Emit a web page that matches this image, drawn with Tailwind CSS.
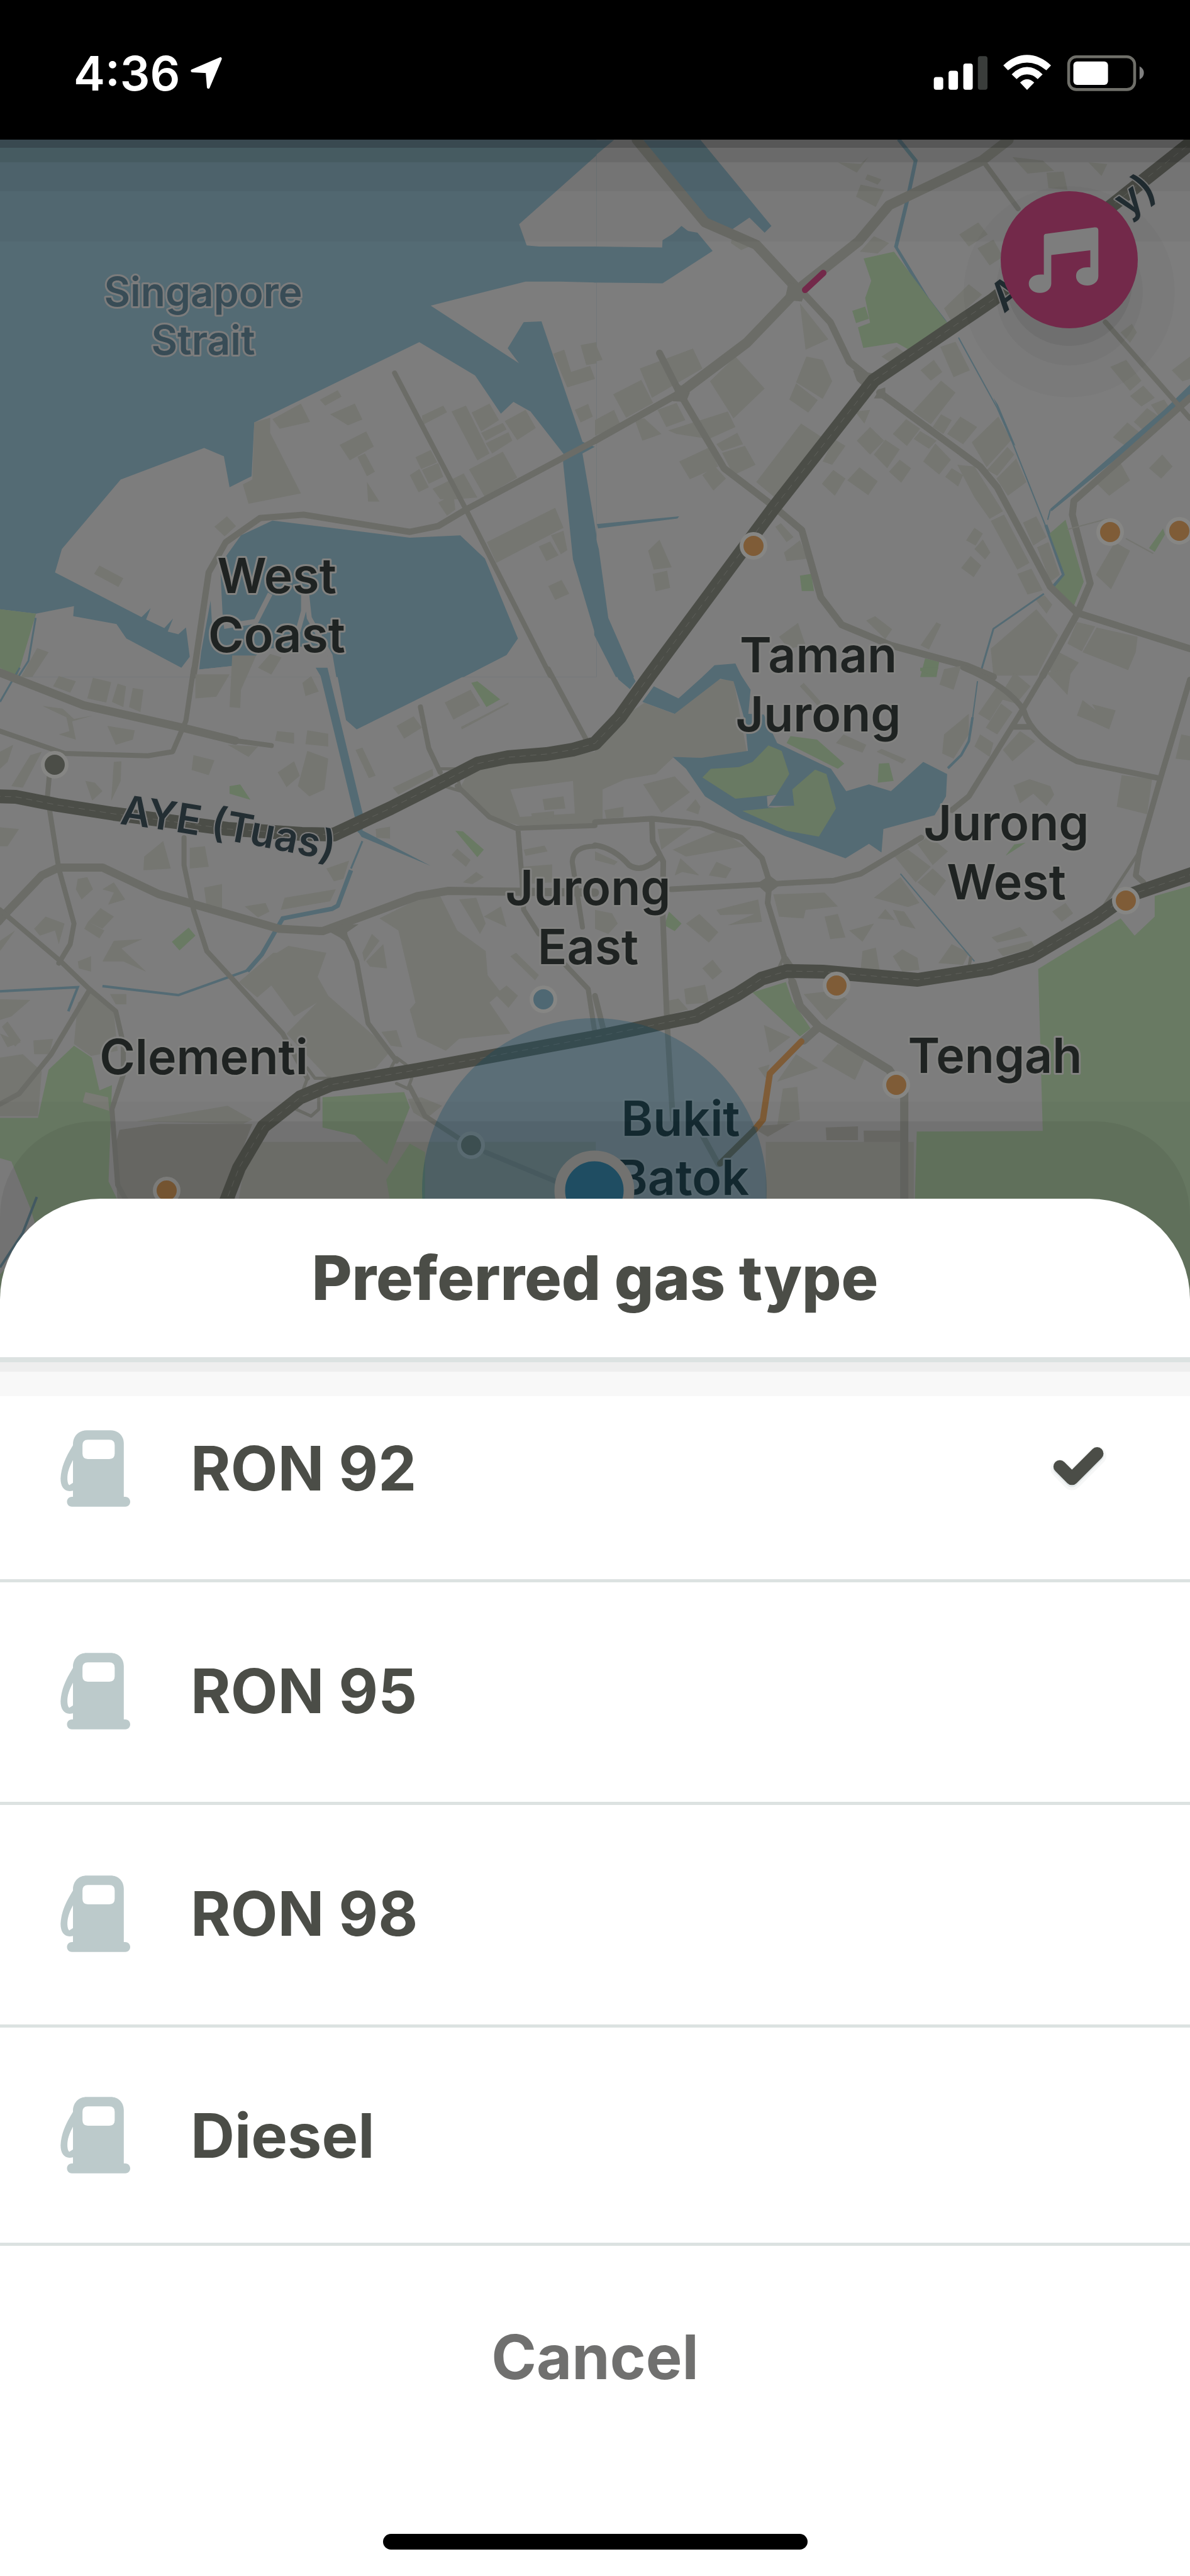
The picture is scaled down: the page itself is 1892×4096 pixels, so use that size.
<!DOCTYPE html>
<html lang="en">
<head>
  <meta charset="UTF-8" />
  <meta name="viewport" content="width=device-width, initial-scale=1.0" />
  <title>Preferred gas type</title>
  <script src="https://cdn.jsdelivr.net/npm/@tailwindcss/browser@4"></script>
</head>
<body class="bg-white font-['Inter',sans-serif] text-[#4b4d47]">
  <!-- Shared icons -->
  <svg class="hidden" aria-hidden="true">
    <symbol id="pump" viewBox="112 116 338 370">
      <path fill="currentColor" fill-rule="evenodd" d="M173 438V408C135 418 113 395 113 350C116 295 135 250 173 188V180C175 142 202 116 240 116H355C392 116 419 142 419 180V438H426C458 438 458 486 426 486H168C136 486 136 438 168 438zM173 260C152 300 145 325 146 355C147 370 150 378 155 382L173 370zM245 162Q219 162 219 188V229Q219 255 245 255H349Q375 255 375 229V188Q375 162 349 162z" />
    </symbol>
    <symbol id="tick" viewBox="100 100 290 240">
      <path d="M155 222L214 282L336 160" fill="none" stroke="#f6f7f7" stroke-width="90" stroke-linecap="round" stroke-linejoin="round" />
      <path d="M155 220L214 279L336 157" fill="none" stroke="#e3e8e9" stroke-width="66" stroke-linecap="round" stroke-linejoin="round" />
      <path d="M155 212L214 271L336 149" fill="none" stroke="#4b4d47" stroke-width="62" stroke-linecap="round" stroke-linejoin="round" />
    </symbol>
  </svg>

  <!-- Status bar -->
  <header class="flex h-[222px] items-center justify-between bg-black pt-[10px] pr-[72px] pl-[117px] text-white">
    <div class="flex items-center gap-[16px]">
      <time class="text-[75px] leading-none font-semibold">4:36</time>
      <svg class="h-[50px] w-[50px]" viewBox="625 66 150 152" aria-label="Location in use">
        <path fill="#fff" stroke="#fff" stroke-width="14" stroke-linejoin="round" d="M632 132L768 73L710 211L704 136z" />
      </svg>
    </div>
    <svg class="h-[58px] w-[337px]" viewBox="75 84 1026 178" aria-label="Signal, wifi and battery">
      <g fill="#fff">
        <rect x="76" y="193" width="46" height="62" rx="12" />
        <rect x="148" y="162" width="46" height="93" rx="12" />
        <rect x="220" y="127" width="46" height="128" rx="12" />
        <rect x="291" y="91" width="47" height="164" rx="12" fill="#3a3d3b" />
        <path d="M415 136Q470 85 531 85T648 136L625 160Q580 122 531 122T438 160z" />
        <path d="M456 180Q490 144 531 144T607 180L583 203Q560 180 531 180T480 203z" />
        <path d="M497 220Q531 188 566 220L531 256z" />
        <rect x="757" y="117" width="169" height="114" rx="18" />
      </g>
      <rect x="734" y="94" width="322" height="160" rx="38" fill="none" stroke="#6f6f69" stroke-width="14" />
      <path d="M1080 141Q1101 152 1101 173T1080 205z" fill="#808080" />
    </svg>
  </header>

  <!-- Map -->
  <main class="relative overflow-hidden bg-[#7d7d7d]">
    <svg class="block w-full" viewBox="0 0 1892 1874" role="img" aria-label="Map of Jurong East and surroundings">
      <!-- north west tile -->
      <g class="[&_path]:[vector-effect:non-scaling-stroke]" transform="translate(0 -5) scale(.6033 .5467)">
        <rect width="1572" height="1572" fill="#546b74" />
        <g fill="#7d7d7d">
          <path d="M1572 55L1368 255L1388 317L1420 320L1572 320z" />
          <path d="M1135 492L1385 422L1478 422L1572 425V905L1535 888L1427 538L1380 540L1338 616L1368 660z" />
          <path d="M1535 922L1572 900V1160z" />
          <path d="M1105 598L1252 695L1320 806L1353 772L1398 800L1485 923L1484 948L1510 1230L1572 1460V1572H0V1375L95 1388L195 1366L193 1395L307 1418L333 1460L478 1545L500 1513L490 1428L470 1448L442 1440L456 1402L433 1430L385 1405L397 1372L373 1398L145 1268L163 1200L318 998L538 906L590 930L605 1020L663 988L670 832z" />
        </g>
        <path fill="#546b74" d="M718 1117L1080 1167L1213 1160L1278 1228L1365 1460L1335 1508L1222 1572H885L875 1520L850 1480L700 1490L640 1537L525 1550L530 1500L555 1350L560 1440L588 1420L580 1245L635 1160z" />
        <path fill="#7d7d7d" d="M525 1550L640 1537L700 1490L800 1500L842 1572H525z" />
        <g fill="none" stroke="#7d7d7d" stroke-width="8">
          <path d="M712 1330L675 1410L590 1425M800 1330V1380L785 1440M808 1330L815 1400L870 1510L880 1575" />
        </g>
        <path fill="#697a63" d="M0 1375L95 1388L45 1572L0 1545z" />
        <path fill="none" stroke="#546b74" stroke-width="3" d="M94 1400L75 1525L48 1572" />
        <path fill="#757671" d="M670 832L712 818V862L793 1038L655 1068L640 1012L665 998zM718 822L793 777L817 830L737 850zM843 766L890 738L900 757L857 783zM870 808L935 777L955 823L917 840zM895 897L965 858L985 902L922 942zM942 932L962 922L988 975L967 988zM967 1005L1000 1062H970zM1112 812L1168 783L1178 802L1115 838zM1190 800L1228 783L1290 922L1258 942zM1243 803L1290 777L1315 825L1268 858zM1268 862L1325 833L1335 852L1280 885zM1280 892L1340 860L1350 885L1297 922zM1330 828L1385 795L1412 848L1363 883zM1095 933L1135 912L1152 948L1110 967zM1080 985L1105 967L1130 1020L1103 1035zM1112 970L1155 950L1168 990L1130 1010zM1140 1025L1222 980L1258 1050L1205 1055H1160zM1155 1065L1195 1040L1200 1085L1178 1103zM1236 968L1325 917L1363 992L1277 1047zM1283 1180L1463 1080L1485 1138L1308 1240zM1420 1192L1450 1178L1472 1218L1440 1235zM1452 1160L1485 1147L1495 1203L1478 1215zM1445 1308L1480 1290L1500 1330L1463 1348zM565 1135L598 1105L622 1133L592 1163zM262 1248L325 1285L312 1310L248 1272zM98 1488L128 1500L85 1572H55zM680 1545L712 1505L742 1515L715 1565zM1458 632L1487 620L1505 685L1555 667L1568 705L1495 730zM1530 607L1572 598V660L1545 665zM1515 795L1550 778L1562 815L1530 832z" />
        <g fill="none" stroke="#6b6c67" stroke-linejoin="round" stroke-linecap="round">
          <path stroke-width="8" d="M1040 688L1228 1085L1450 1568" />
          <path stroke-width="10" d="M1568 885L1228 1085L1155 1133L1080 1150L800 1100L685 1110L595 1180L550 1268L510 1568" />
        </g>
      </g>

      <!-- north east tile -->
      <g class="[&_path]:[vector-effect:non-scaling-stroke]" transform="translate(946 -5) scale(.6033 .5467)">
        <path fill="#757671" d="M640 75L700 80L720 60L690 105zM718 110L755 125L745 140L712 125zM700 140L762 155L740 205L688 175zM365 280L400 290L425 312L385 330L358 310zM735 290L775 310L745 340L698 335zM960 285L1010 250L1035 285L985 320zM1008 325L1050 300L1075 350L1040 375zM540 485L615 590L555 620zM0 600L20 650L0 655zM118 675L258 617L283 675L150 760zM48 750L122 708L153 775L82 818zM303 712L370 640L447 733L365 820zM557 640L600 650L625 712L600 763L530 715zM530 718L587 767L562 803L512 765zM0 825L50 795L68 840L0 870zM105 825L130 820L175 865L125 885zM165 795L215 775L238 825L188 845zM193 855L350 800L370 845L300 880L215 865zM222 945L300 905L325 960L250 997zM320 895L375 862L390 895L335 915zM335 920L395 900L423 955L365 985zM283 985L315 958L345 995L312 1030zM425 1005L543 835L605 880L490 1065zM755 640L795 612L830 640L775 655zM910 612L950 597L988 680L945 700zM858 680L893 650L915 685L885 710zM838 800L912 710L950 745L885 837zM690 885L725 845L762 885L725 925zM785 865L820 822L857 850L822 900zM735 925L765 882L803 910L770 965zM600 945L630 880L660 900L625 955zM685 800L725 795L710 835zM598 1010L628 970L660 995L632 1045zM665 1000L697 962L745 1003L720 1043zM775 975L803 940L833 965L807 1007zM840 880L857 857L900 885L880 908zM865 945L897 893L938 940L907 983zM890 845L912 808L940 825L918 865zM928 865L963 815L1007 845L970 895zM923 990L940 965L970 985L957 1018zM993 890L1063 815L1097 883L1032 962zM1033 970L1087 903L1105 925L1060 987zM1058 995L1110 937L1137 1005L1088 1045zM955 955L1000 960L1075 1090L1040 1112L1000 1050zM1043 1118L1078 1100L1145 1240L1113 1260zM1128 1123L1163 1105L1190 1165L1155 1190zM1165 1195L1195 1180L1225 1275L1200 1295zM1113 1272L1150 1257L1180 1320L1140 1332zM1160 1345L1185 1335L1205 1362L1190 1388zM920 500L985 430L1020 460L940 540zM1358 670L1400 650L1440 710L1410 740zM1410 755L1445 725L1475 760L1440 785zM1465 780L1500 765L1520 800L1490 820zM1420 830L1455 790L1500 825L1460 870zM1365 875L1403 832L1440 865L1405 905zM1385 570L1415 545L1428 570L1410 600zM1520 680L1568 640V705L1548 712zM1323 1010L1385 950L1410 1000L1355 1045zM1460 965L1495 925L1522 960L1492 995zM1320 1275L1370 1180L1410 1205L1360 1317zM475 1135L490 1125L523 1165L505 1180zM498 1210L540 1175L560 1228L505 1235zM140 1205L170 1173L202 1253L155 1260zM152 1272L190 1263L198 1313L160 1323zM978 1175L1000 1138L1022 1155L1003 1190zM1000 1200L1022 1172L1042 1210L1028 1230zM965 1255L990 1220L1018 1248L998 1282zM485 1455L535 1415L555 1480L510 1490zM715 1408L738 1395L783 1433L765 1462zM858 1480L900 1413L912 1420L880 1492zM1043 1490L1163 1375L1220 1450L1165 1568H1050zM1245 1475L1270 1412L1318 1425L1283 1497zM1285 1500L1322 1428L1430 1455L1425 1500L1405 1552zM1195 1540L1218 1497L1275 1530L1250 1568H1205zM1100 60L1180 70L1210 100L1140 108zM1190 105L1235 102L1245 155L1195 150zM1300 75L1350 80L1335 115z" />
        <g fill="#546b74">
          <path d="M-2 320L177 323L178 302L205 283L228 260L245 275L270 280L310 333L178 427L-2 425z" />
          <path d="M-2 10H50L-2 58z" />
          <path d="M118 10H278L465 260L447 280L407 236L362 270L320 265L290 240z" />
          <path d="M788 320H797L880 470L930 542L880 490z" />
          <path d="M1568 722V765L1203 1090L1200 1083L1500 795z" />
          <path d="M5 1127L222 1105L217 1111L8 1140z" />
          <path d="M-2 1150L10 1200L35 1400L103 1572H55L-2 1450z" />
          <path d="M283 1572L315 1538L370 1533L387 1572z" />
          <path d="M1050 760L1062 780L1108 900L1100 892z" />
        </g>
        <g fill="none" stroke="#546b74">
          <path stroke-width="6" d="M800 8L845 70L822 190L793 322" />
          <path stroke-width="2" d="M958 585L1060 790L1100 890L1190 1140M1200 1085L1193 1115" />
          <path stroke-width="5" d="M1188 1130L1235 1275L1208 1308" />
          <path stroke-width="3" d="M1183 1330L1050 1432L1018 1552" />
        </g>
        <path fill="#697a63" d="M708 355L788 335L928 542L830 622L795 600L707 615L693 555L725 542L712 470L728 420zM678 507L712 495L722 530L688 543zM1240 1115L1288 1295L1262 1365L1208 1315L1238 1275L1198 1155zM540 1277L570 1272L577 1322H545zM1460 1197L1497 1140L1502 1158L1475 1208zM870 1518L907 1528L900 1572H857z" />
        <g fill="none" stroke="#6b6c67" stroke-linejoin="round" stroke-linecap="round">
          <path stroke-width="16" d="M110 10L290 250L425 315L530 440L535 445L400 600L225 745M1090 10L1020 70L775 200L695 305L535 445" />
          <path stroke-width="11" d="M540 445L620 540L670 655L720 700M0 885L225 745M170 630L225 750L340 965L470 1075L545 1145L595 1340L650 1420L780 1480L980 1540L1050 1572M750 745L1015 960L1060 1020L1200 1310L1270 1385L1568 1490M1568 760L1262 1060L1258 1100L1305 1300L1270 1390L1180 1568" />
          <path stroke-width="8" d="M1025 75L1115 210M1345 540L1568 820" />
          <path stroke-width="2" stroke="#747570" d="M1245 1143L1350 1112M1400 1170L1470 1212" />
        </g>
        <path fill="#6b6c67" d="M680 680L740 690L720 740L690 710zM735 762H765V730L750 735zM205 770L240 772L250 745L215 715zM510 425L560 435L545 480L500 475z" />
      </g>

      <!-- south west tile -->
      <g class="[&_path]:[vector-effect:non-scaling-stroke]" transform="translate(0 842) scale(.6033 .5467)">
        <path fill="#757671" d="M140 50L155 20L200 35L185 68zM230 85L245 25L293 38L280 97zM295 95L310 42L332 50L325 110zM340 110L350 55L378 60L370 125zM515 15H605L570 80L515 85zM612 -40H675L635 60L633 113L605 110zM797 40L820 20L840 65L805 78zM112 107L165 115L195 145L245 135L190 152L200 205L155 190L183 180L175 140zM283 165L355 178L350 205L305 220zM730 180L775 185V217L725 208zM810 178L865 188V225L805 218zM510 250L565 265L550 308L505 293zM600 220L680 225L655 255zM732 300L775 268L790 310L755 343zM785 340L810 238L865 260L855 350L815 370zM225 325L250 330L270 355L243 382zM300 270L320 268L318 325L293 383zM937 235L955 228L990 310L972 317zM1045 165L1090 137L1112 170L1065 202zM1172 97L1240 60L1265 105L1195 147zM1215 168L1340 97V102L1217 175zM1035 345L1140 290L1142 310L1050 365zM0 240L35 220L20 270L0 290zM30 340L80 250L110 240L60 345zM0 460L50 465L20 515H0zM990 465L1028 458V493L992 490zM1190 540L1205 522L1240 555L1228 575zM1380 525L1435 513L1443 530L1385 543zM1220 620L1255 590L1275 605L1245 625zM1375 575L1455 568V620L1375 625zM860 580L920 557L905 610L880 617zM750 665L885 640L870 675L740 700zM645 690L700 680L710 705L680 722zM380 545L430 500L450 580L378 585zM500 520L540 515L550 575L500 580zM538 635L585 625V695H545zM205 610L230 605L245 640L215 670L200 640zM232 735L265 695L300 720L270 755zM222 755L232 735L275 760L262 783zM90 755L120 720L170 740L155 800L145 760L105 775zM270 640L300 620L330 670L285 685L300 650zM270 850L300 790L375 785L320 812L385 880L325 850zM205 850L240 835V880L208 870zM0 790L40 760L0 820zM730 825L760 805L860 825L837 895L865 950L1030 1110L990 1160L870 1195L755 1060L835 970L775 1010L715 920L678 955L630 910L720 825zM955 825L980 770L1000 790L960 850zM965 850L1010 800L1020 870L975 865zM1000 725L1100 670L1160 660L1205 760L1280 820L1285 890L1320 940L1290 970L1345 1060L1210 1075L1175 1110L1100 1070L1080 990L1095 970L1050 760zM1210 670L1255 665L1280 740L1265 770zM1275 720L1320 690L1335 750zM1345 835L1360 825L1420 890L1410 905zM1305 945L1335 920L1365 950L1340 985zM1005 1055L1045 1050L1060 1100L1030 1095zM1210 350L1240 290L1568 240V450L1370 455L1290 430zM0 960L80 962L30 1010L0 1020zM0 1060L55 1085L20 1100zM5 1040L20 1025L55 1080L40 1098zM88 1080L140 1075L130 1120H90zM205 970L240 940L300 1000L310 1110L240 1125L195 1090zM290 945H333V975H305zM0 1130L60 1120L110 1170L100 1300H0zM1075 1250L1110 1245L1165 1270L1120 1310L1090 1290zM840 1500L885 1435L915 1460L905 1530L860 1568H830z" />
        <path fill="#7d7d7d" d="M1345 350L1510 325L1515 420L1370 430z" />
        <path fill="#757671" d="M1430 378L1485 370L1490 405L1435 410zM1400 420L1460 413V430L1405 443z" />
        <path fill="#70706c" d="M315 1340L420 1323H665L620 1450V1700H320L300 1400zM480 1405L600 1400L520 1435z" />
        <path fill="#757671" d="M360 1315L600 1270L665 1310L640 1323zM690 1375H1570V1800H590L640 1470z" />
        <path fill="#7d7d7d" d="M0 1425L30 1432L80 1568L100 1640L0 1760z" />
        <g fill="#546b74">
          <path d="M885 -4H1268L940 175L912 148z" />
          <path d="M832 -4H863L958 430L955 475H943L935 430L845 20z" />
          <path d="M942 470L957 470L1135 572L1130 570L953 488z" />
        </g>
        <g fill="none" stroke="#546b74">
          <path stroke-width="3" d="M52 -4L0 95M955 500L925 580" />
          <path stroke-width="7" d="M925 585L890 688L875 697L745 725L690 830L652 878" />
          <path stroke-width="4" d="M655 875L470 948L270 922M0 937L205 925L180 995" />
        </g>
        <path fill="#697a63" d="M25 -2H48L38 15zM605 340L633 335L660 380L605 362zM1242 40L1258 35L1318 88L1282 110zM1200 470L1220 472L1275 525L1258 547zM453 793L497 752L515 775L473 818zM195 1095L242 1130L262 1225L295 1210L286 1490L320 1568V1800H90L100 1640L80 1568L30 1432L0 1422V1305H100L128 1165zM850 1245L1065 1230L1080 1275L1020 1440L935 1355L850 1333zM1080 1380L1120 1405V1620H1040L1018 1485zM0 1760L100 1640V1860H0z" />
        <path fill="#7a7b75" d="M225 1230L285 1245L288 1285L218 1260z" />
        <path fill="none" stroke="#49606b" stroke-width="4" d="M0 1740L60 1640L97 1535" />
        <g fill="none" stroke="#6b6c67" stroke-linejoin="round" stroke-linecap="round">
          <path stroke-width="13" d="M-5 8L220 105L480 170L620 208M-5 735L15 710L110 600L155 577H270L420 655L735 755L850 762L1100 660L1180 645L1568 650" />
          <path stroke-width="8" d="M620 208L715 222M510 0L490 150L455 240L390 252L170 245L0 180M130 310L125 370L155 580L195 740L185 800L155 855M0 700L160 850L235 930L305 995L325 1090V1180L295 1280L310 1500L340 1560M235 935L135 1120L50 1235L0 1265M485 490V570L510 700L545 820L745 1060L810 1190M905 765L940 850L970 1030L1045 1140M1108 110L1130 230L1160 300M1205 340L1290 430L1360 463L1568 455M1365 465L1375 600L1380 700L1420 770M1445 0L1545 205M1568 515Q1510 515 1508 560L1535 750M1490 860L1550 930L1568 1060M1080 1215L1120 1300L1210 1365M1280 1405L1465 1490" />
          <path stroke-width="5" d="M1155 290H1200L1215 355L1170 340M810 1190L780 1280L820 1300L840 1280V1230M1045 1205L1075 1220L1085 1190M1030 1160L1045 1130L1070 1150M810 1160L830 1190H870" />
        </g>
        <path fill="#6b6c67" d="M870 765L905 742H945L915 765L918 800L895 780z" />
      </g>

      <!-- south east tile -->
      <g class="[&_path]:[vector-effect:non-scaling-stroke]" transform="translate(946 842) scale(.6033 .5467)">
        <path fill="#757671" d="M130 98L208 130L325 30H365L400 240L280 258L208 255L160 305L80 320L20 350V450H0V215L60 150zM127 335L210 312L250 358L175 418zM240 410L265 378L278 400L272 422zM25 410L75 400V430L30 435zM165 465L255 460L175 525zM205 525L330 468L395 515L240 545zM210 600L225 550L275 600L230 590zM300 600L320 560L360 580L345 608zM470 655L605 650L640 690L555 700L550 725L485 720zM240 740L275 712L325 765L300 795zM320 700L430 670L440 735L350 745L420 712L330 715zM605 720L640 712L660 780L620 785zM670 760L735 740L705 793zM735 665L805 605L855 680L825 692zM745 725L765 698L790 730zM785 700L815 705L845 755L805 745zM790 545L825 525L885 575L845 620zM850 510L880 485L930 530L890 570zM850 620L890 580L925 615L895 660zM915 245L920 190L985 130V190L945 260zM920 0L965 -10L945 60L908 45zM1000 225L1015 190L1050 215L1040 255zM1030 170L1070 100L1100 125L1060 190zM1063 85L1105 10L1148 50L1110 100zM1010 130L1060 50L1085 70L1040 150zM1075 235L1120 180L1160 210L1100 268zM1190 10L1255 0L1245 75zM1103 338L1145 320L1200 340L1210 365L1190 398L1155 362L1120 390zM1388 308L1468 320L1455 422L1375 400zM1270 135L1285 90L1320 120L1310 102L1372 120L1355 175L1315 155zM635 215L655 190L715 220L705 243zM742 240L755 232L820 262L810 275zM540 50L550 40L595 95L588 108zM1205 705L1240 680L1260 710L1230 735zM1045 780L1120 750L1140 775L1060 795zM1060 815L1150 790L1160 810L1075 835zM905 855L940 800L985 825L970 860zM705 820L740 810L750 875H700zM785 835L810 815L850 840L855 875L810 880zM550 945L630 935L665 960L610 1020zM235 930L290 918L300 970L240 975zM190 965L220 958L245 990L195 1005zM283 870L310 845L335 880L310 903zM640 1090L713 1127L685 1195L598 1140zM445 1035L515 1070L460 1115zM480 1200L530 1120L588 1160zM495 1220L533 1215L540 1310L480 1330zM430 1160L460 1150L450 1190zM0 700L45 710L60 740L35 770L0 755zM0 530L60 560L50 570L0 555zM1530 260L1545 190L1568 195V265z" />
        <path fill="#70706c" d="M608 1333L693 1330V1370H610zM708 1342H807V1478H757V1415H710zM410 1330L515 1322L455 1360z" />
        <path fill="#757671" d="M450 1375H840V1620H450z" />
        <g fill="#546b74">
          <path d="M48 -4H87L107 35L92 58L62 30z" />
          <path d="M125 95L155 50L220 85L310 -4H372L410 60L404 130L445 132L480 215L622 290L662 355L722 335L780 355L865 270L928 305L925 370L895 425L760 465L755 533L722 508L660 550L500 485L385 435L290 370L240 290L205 255L280 258L403 238L395 150L365 35L330 28L210 130z" />
        </g>
        <path fill="#7d7d7d" d="M455 400L453 370L478 365L458 398zM460 398H528L525 404L455 402z" />
        <g fill="none" stroke="#546b74">
          <path stroke-width="2" d="M1008 35L993 160M805 595L1000 850" />
          <path stroke-width="4" d="M995 140L985 210L965 250L930 288" />
        </g>
        <path fill="#697a63" d="M283 315L305 290L380 285L415 270L457 222L492 238L512 305L478 365L370 377zM388 412L525 397L520 350L580 292L610 305L635 405L590 487L505 470zM505 215L515 195L585 205L657 275L640 290zM748 275L775 273L787 325L745 330zM1082 543L1105 510L1135 505zM195 705L228 740L210 762L183 745zM415 940L503 910L520 965L568 1045L540 1068zM1475 660L1572 630V1860H835L848 1345L1180 1343L1168 872L1385 725L1422 775L1475 720zM857 -4H905L895 20L857 5z" />
        <g fill="none" stroke="#6b6c67" stroke-linejoin="round" stroke-linecap="round">
          <path stroke-width="9" d="M0 445L150 435L280 450L385 490L440 550L460 620L455 680L505 860L540 980M200 640L460 625L630 615L700 595L860 490M940 410L985 370L1120 130L1190 0M970 -5Q1090 50 1130 120Q1150 200 1270 268L1490 318M1568 30L1490 318L1435 530L1425 600L1445 620M150 440L152 500L180 560L178 700L190 1030L205 1310M0 512Q50 520 90 570Q125 595 165 550M1103 168H1145M285 1360L325 1440M0 950L25 1060" />
          <path stroke-width="13" d="M520 910L540 980L590 1040L775 1165L815 1230V1568M590 1040L550 1080" />
          <path stroke-width="5" d="M1435 530L1340 690M500 830L480 880M505 840L530 880M990 840L985 870" />
        </g>
        <path fill="#6b6c67" d="M425 625L460 600L490 625L455 655z" />
      </g>

      <!-- expressways -->
      <g fill="none" stroke-linejoin="round">
        <g stroke="#4b4d47" stroke-width="22">
          <path d="M1900 0L1578 255L1389 383L1230 586L1033 852L985 919L946 960L911 970L869 977L808 982L760 992L706 1020L621 1063L531 1105L480 1104L362 1096L181 1072L91 1058L25 1045L-10 1044" />
          <path d="M350 1712L380 1635L419 1569L477 1523L525 1503L664 1479L946 1427L1106 1394L1172 1359L1211 1334L1251 1322L1308 1323L1459 1336L1574 1318L1640 1298L1742 1238L1791 1203L1900 1166" />
        </g>
        <g stroke="#5f605b" stroke-width="1" stroke-dasharray="10 7">
          <path d="M1900 0L1578 255L1389 383L1230 586L1033 852L985 919L946 960L911 970L869 977L808 982L760 992L706 1020L621 1063L531 1105L480 1104L362 1096L181 1072L91 1058L25 1045L-10 1044" />
          <path d="M350 1712L380 1635L419 1569L477 1523L525 1503L664 1479L946 1427L1106 1394L1172 1359L1211 1334L1251 1322L1308 1323L1459 1336L1574 1318L1640 1298L1742 1238L1791 1203L1900 1166" />
        </g>
      </g>

      <!-- traffic -->
      <g fill="none" stroke-linecap="round" stroke-linejoin="round" stroke-width="10">
        <path stroke="#73294a" d="M1280 239L1309 212" />
        <path stroke="#7f5c37" d="M1274 1434L1224 1485L1213 1558L1200 1574" />
        <path stroke="#5d5546" d="M1200 1574L1145 1628" />
      </g>

      <!-- pins -->
      <g stroke="#868684" stroke-width="6">
        <g fill="#7f5c37">
          <circle cx="1198" cy="646" r="19" />
          <circle cx="1765" cy="624" r="19" />
          <circle cx="1875" cy="622" r="19" />
          <circle cx="1330" cy="1345" r="19" />
          <circle cx="1425" cy="1503" r="19" />
          <circle cx="1790" cy="1210" r="19" />
          <circle cx="265" cy="1671" r="19" />
        </g>
        <circle cx="87" cy="994" r="19" fill="#4b4d47" />
        <circle cx="864" cy="1367" r="19" fill="#4f6873" />
        <circle cx="749" cy="1599" r="19" fill="#5b5b53" />
      </g>

      <!-- place names -->
      <g class="font-semibold" text-anchor="middle" fill="#1f2322" stroke="#828280" stroke-width="6" stroke-linejoin="round" paint-order="stroke" font-size="77">
        <g font-size="64" fill="#384c56" stroke="#7c7c7c">
          <text x="323" y="265">Singapore</text>
          <text x="323" y="342">Strait</text>
        </g>
        <text x="440" y="721">West</text>
        <text x="440" y="815">Coast</text>
        <text x="1301" y="847">Taman</text>
        <text x="1301" y="941">Jurong</text>
        <text x="1600" y="1114">Jurong</text>
        <text x="1600" y="1208">West</text>
        <text x="935" y="1217">Jurong</text>
        <text x="935" y="1311">East</text>
        <text x="324" y="1486">Clementi</text>
        <text x="1582" y="1484">Tengah</text>
        <text x="1082" y="1584">Bukit</text>
        <text x="1085" y="1678">Batok</text>
      </g>
      <g class="font-semibold" fill="#232e33" stroke="#7c7c7c" stroke-width="4" stroke-linejoin="round" paint-order="stroke" font-size="65">
        <path id="aye-label" d="M190 1088Q350 1108 570 1156" fill="none" stroke="none" />
        <text><textPath href="#aye-label">AYE (Tuas)</textPath></text>
        <text transform="translate(1596 277) rotate(-38)">A</text>
        <text transform="translate(1792 124) rotate(-36)">y)</text>
      </g>

      <!-- current position -->
      <circle cx="945" cy="1671" r="274" fill="#004868" fill-opacity="0.27" />
      <circle cx="945" cy="1671" r="55" fill="#22546c" stroke="#7d7d7a" stroke-width="17" />

      <!-- shading under the top bar and above the sheet -->
      <g fill="#000">
        <rect y="0" width="1892" height="13" fill-opacity="0.18" />
        <rect y="0" width="1892" height="36" fill-opacity="0.08" />
        <rect y="0" width="1892" height="82" fill-opacity="0.04" />
        <rect y="0" width="1892" height="162" fill-opacity="0.03" />
        <rect y="1530" width="1892" height="350" fill-opacity="0.02" />
        <rect y="1561" width="1892" height="500" rx="150" fill-opacity="0.06" />
        <circle cx="1700" cy="242" r="168" fill-opacity="0.02" />
        <circle cx="1700" cy="242" r="117" fill-opacity="0.03" />
        <circle cx="1700" cy="228" r="100" fill-opacity="0.06" />
      </g>
    </svg>
    <button type="button" aria-label="Open music player" class="absolute top-[82px] right-[83px] h-[218px] w-[218px] rounded-full bg-[#73294a]">
      <svg class="h-full w-full" viewBox="105 116 664 664">
        <path fill="#7d7d7d" d="M314 520V334Q314 323 325 322L560 291Q578 289 578 306V528C578 556 552 573 525 573C494 573 470 555 470 527C470 496 497 482 539 485V402L350 425V563C350 591 324 609 295 609C265 609 241 591 241 564C241 534 270 515 314 520z" />
      </svg>
    </button>
  </main>

  <!-- Gas type sheet -->
  <section class="relative -mt-[190px] rounded-t-[160px] bg-white" aria-labelledby="sheet-title">
    <div class="relative z-10 flex h-[260px] items-center justify-center border-b-8 border-[#dce2e1]">
      <h1 id="sheet-title" class="text-[98px] leading-none font-extrabold">Preferred gas type</h1>
      <div class="absolute inset-x-0 top-full mt-2 h-[54px] border-t-[15px] border-[#eeeeee] bg-[#f8f8f8]"></div>
    </div>
    <form>
      <fieldset class="-mt-1" aria-labelledby="sheet-title">
        <label class="relative flex h-[354px] items-center border-b-[5px] border-[#dce2e1] pr-[130px] pb-1 pl-24">
          <input type="radio" name="gas" value="ron92" checked class="peer sr-only" />
          <svg class="h-[122px] w-[111px] text-[#bccacb]"><use href="#pump" /></svg>
          <span class="ml-24 flex-1 text-[97px] leading-none font-bold">RON 92</span>
          <svg class="invisible h-[79px] w-[95px] peer-checked:visible"><use href="#tick" /></svg>
        </label>
        <label class="relative flex h-[354px] items-center border-b-[5px] border-[#dce2e1] pr-[130px] pb-1 pl-24">
          <input type="radio" name="gas" value="ron95" class="peer sr-only" />
          <svg class="h-[122px] w-[111px] text-[#bccacb]"><use href="#pump" /></svg>
          <span class="ml-24 flex-1 text-[97px] leading-none font-bold">RON 95</span>
          <svg class="invisible h-[79px] w-[95px] peer-checked:visible"><use href="#tick" /></svg>
        </label>
        <label class="relative flex h-[354px] items-center border-b-[5px] border-[#dce2e1] pr-[130px] pb-1 pl-24">
          <input type="radio" name="gas" value="ron98" class="peer sr-only" />
          <svg class="h-[122px] w-[111px] text-[#bccacb]"><use href="#pump" /></svg>
          <span class="ml-24 flex-1 text-[97px] leading-none font-bold">RON 98</span>
          <svg class="invisible h-[79px] w-[95px] peer-checked:visible"><use href="#tick" /></svg>
        </label>
        <label class="relative flex h-[347px] items-center border-b-[5px] border-[#dce2e1] pr-[130px] pl-24">
          <input type="radio" name="gas" value="diesel" class="peer sr-only" />
          <svg class="h-[122px] w-[111px] text-[#bccacb]"><use href="#pump" /></svg>
          <span class="ml-24 flex-1 text-[97px] leading-none font-bold">Diesel</span>
          <svg class="invisible h-[79px] w-[95px] peer-checked:visible"><use href="#tick" /></svg>
        </label>
      </fieldset>
      <button type="button" class="block h-[352px] w-full text-[97px] leading-none font-bold text-[#70706f]">Cancel</button>
    </form>
    <div class="flex justify-center pt-[106px] pb-[41px]">
      <div class="h-[25px] w-[675px] rounded-full bg-black"></div>
    </div>
  </section>
</body>
</html>
